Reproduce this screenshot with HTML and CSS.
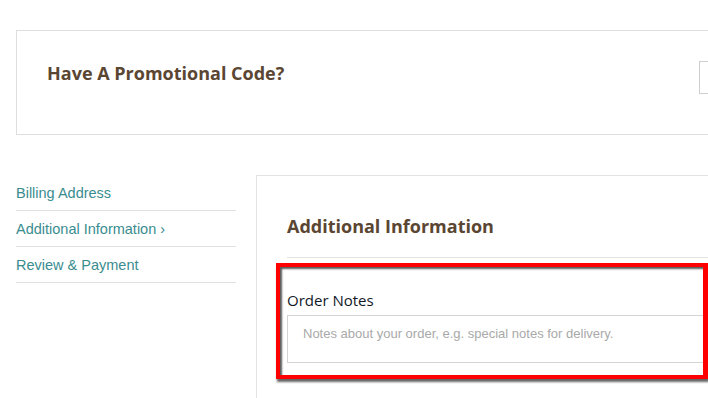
FILE: index.html
```html
<!DOCTYPE html>
<html>
<head>
<meta charset="utf-8">
<link rel="stylesheet" href="styles.css">
</head>
<body>
<div class="page">
  <div class="promo">
    <h2 class="promo-title">Have A Promotional Code?</h2>
    <div class="promo-input"></div>
  </div>
  <div class="checkout">
    <nav class="steps">
      <a class="step">Billing Address</a>
      <a class="step">Additional Information &#8250;</a>
      <a class="step">Review &amp; Payment</a>
    </nav>
    <section class="panel">
      <h2 class="panel-title">Additional Information</h2>
      <div class="highlight">
        <label class="field-label">Order Notes</label>
        <div class="notes">Notes about your order, e.g. special notes for delivery.</div>
      </div>
    </section>
  </div>
</div>
</body>
</html>
```

FILE: styles.css
```css
html, body {
  margin: 0;
  padding: 0;
  background: #fff;
  overflow: hidden;
  width: 708px;
  height: 398px;
}
.page {
  padding: 30px 0 0 16px;
  width: 1200px;
}
.promo {
  box-sizing: border-box;
  width: 914px;
  height: 105px;
  border: 1px solid #dedede;
  display: flex;
  align-items: flex-start;
  justify-content: space-between;
  padding: 30px 30px 0 30px;
}
.promo-title, .panel-title {
  margin: 0;
  font-family: "Open Sans", sans-serif;
  font-weight: 700;
  font-size: 18px;
  line-height: 24px;
  color: #5a4632;
}
.promo-input {
  box-sizing: border-box;
  width: 200px;
  height: 33px;
  border: 1px solid #cfcfcf;
}
.checkout {
  display: flex;
  gap: 20px;
  margin-top: 40px;
}
.steps {
  width: 220px;
  flex: none;
  display: flex;
  flex-direction: column;
}
.step {
  font-family: "Liberation Sans", Arial, sans-serif;
  font-size: 14.5px;
  line-height: 17px;
  padding: 10px 0 8px;
  color: #3a8c90;
  border-bottom: 1px solid #e1e1e1;
}
.panel {
  width: 700px;
  height: 300px;
  border: 1px solid #e3e3e3;
  border-right: none;
  padding: 38px 0 0 30px;
  box-sizing: border-box;
}
.panel-title {
  padding-bottom: 19px;
  border-bottom: 1px solid #e3e3e3;
}
.highlight {
  box-sizing: border-box;
  width: 432px;
  margin: 5px 0 0 -11px;
  border: 4px solid #ff0000;
  border-right-width: 5px;
  padding: 23px 0 12px 7px;
  box-shadow: inset 2px 2px 2px rgba(0,0,0,0.65), 1px 3px 2px rgba(0,0,0,0.6);
}
.field-label {
  display: block;
  font-family: "Open Sans", sans-serif;
  font-size: 15px;
  line-height: 20px;
  color: #111827;
  margin-bottom: 5px;
}
.notes {
  box-sizing: border-box;
  height: 48px;
  border: 1px solid #d4d4d4;
  border-right: none;
  padding: 10px 15px;
  font-family: "Liberation Sans", Arial, sans-serif;
  font-size: 13px;
  line-height: 15px;
  color: #a9a9a9;
}
```
